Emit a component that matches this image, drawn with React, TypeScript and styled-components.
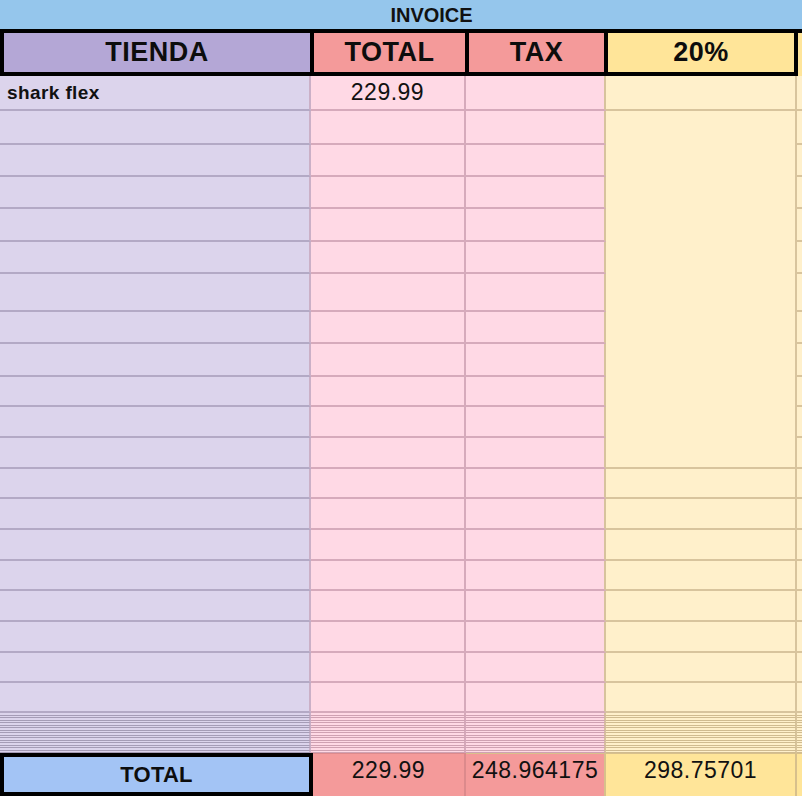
import React from 'react';
import styled, { createGlobalStyle } from 'styled-components';

const GlobalStyle = createGlobalStyle`
  html, body { margin: 0; padding: 0; background: #ffffff; }
  body { font-family: "Liberation Sans", Arial, sans-serif; color: #111; }
  *, *::before, *::after { box-sizing: border-box; }
`;

type ColKey = 'store' | 'total' | 'tax' | 'pct' | 'extra';

const palette: Record<ColKey, { bg: string; hLine: string; vLine: string; thinLine: string }> = {
  store: { bg: '#dcd4ec', hLine: '#b3a9c5', vLine: '#cbb0c7', thinLine: '#a59cb6' },
  total: { bg: '#ffd9e5', hLine: '#d6aabb', vLine: '#d6aabb', thinLine: '#cfa1b2' },
  tax: { bg: '#ffd9e5', hLine: '#d6aabb', vLine: '#d7c39d', thinLine: '#cfa1b2' },
  pct: { bg: '#fff0cb', hLine: '#d8c49d', vLine: '#d8c49d', thinLine: '#d0bb90' },
  extra: { bg: '#fff0cb', hLine: '#d8c49d', vLine: '#d8c49d', thinLine: '#d0bb90' },
};

const cols: ColKey[] = ['store', 'total', 'tax', 'pct', 'extra'];

const Sheet = styled.div`
  width: 802px;
  height: 796px;
  overflow: hidden;
  display: flex;
  flex-direction: column;
`;

const TitleBar = styled.div`
  height: 29px;
  flex: none;
  background: #95c6ec;
  display: flex;
  align-items: center;
  justify-content: center;
  padding: 2px 0 0 61px;
  font-size: 20px;
  font-weight: 700;
  color: #111;
`;

const HeaderRow = styled.div`
  flex: none;
  display: flex;
  background: #000;
  padding-top: 4px;
`;

const HeaderBox = styled.div`
  display: grid;
  grid-template-columns: 306px 151px 135px 186px;
  gap: 4px;
  padding: 0 4px 4px 4px;
  background: #000;
`;

const HeaderCell = styled.div<{ $bg: string }>`
  height: 39px;
  background: ${(p) => p.$bg};
  display: flex;
  align-items: center;
  justify-content: center;
  font-size: 27px;
  font-weight: 700;
  letter-spacing: 0.5px;
  color: #0d0d0d;
`;

const HeaderSliver = styled.div`
  flex: 1;
  background: #ffe599;
`;

const Body = styled.div<{ $rows: string }>`
  flex: none;
  display: grid;
  grid-template-columns: 311px 155px 140px 191px 1fr;
  grid-template-rows: ${(p) => p.$rows};
`;

const Cell = styled.div<{ $col: ColKey; $thin?: boolean; $span?: number }>`
  background: ${(p) => palette[p.$col].bg};
  border-bottom: ${(p) => (p.$thin ? 1 : 2)}px solid
    ${(p) => (p.$thin ? palette[p.$col].thinLine : palette[p.$col].hLine)};
  border-right: ${(p) => (p.$col === 'extra' ? 0 : 2)}px solid ${(p) => palette[p.$col].vLine};
  grid-row: ${(p) => (p.$span ? `span ${p.$span}` : 'auto')};
  display: flex;
  align-items: center;
  overflow: hidden;
  min-height: 0;
`;

const StoreText = styled.span`
  padding-left: 7px;
  font-size: 19px;
  font-weight: 700;
  letter-spacing: 0.4px;
  color: #111;
  white-space: nowrap;
`;

const NumberText = styled.span`
  flex: 1;
  text-align: center;
  font-size: 23px;
  letter-spacing: 0.5px;
  color: #111;
  white-space: nowrap;
`;

const TotalRow = styled.div`
  flex: none;
  height: 43px;
  display: grid;
  grid-template-columns: 313px 153px 140px 191px 1fr;
`;

const TotalLabel = styled.div`
  border: 4px solid #000;
  background: #a3c4f5;
  display: flex;
  align-items: center;
  justify-content: center;
  font-size: 22px;
  font-weight: 700;
  letter-spacing: 0.2px;
  color: #0d0d0d;
`;

const TotalCell = styled.div<{ $bg: string; $line: string; $last?: boolean }>`
  background: ${(p) => p.$bg};
  border-top: 1px solid ${(p) => p.$line};
  border-right: ${(p) => (p.$last ? 0 : 2)}px solid ${(p) => p.$line};
  display: flex;
  justify-content: center;
  align-items: flex-start;
  padding-top: 3px;
  font-size: 23px;
  letter-spacing: 0.5px;
  color: #111;
  white-space: nowrap;
`;

const rowHeights = [35, 34, 32, 32, 33, 32, 38, 32, 33, 30, 31, 31, 30, 31, 31, 30, 31, 31, 30, 30];
const thinHeights = Array.from({ length: 16 }, (_, i) => (i % 2 === 0 ? 3 : 2));
const MERGE_START = 1;
const MERGE_SPAN = 11;

export default function App() {
  const rowsTemplate = [...rowHeights, ...thinHeights].map((h) => `${h}px`).join(' ');

  const cells: React.ReactNode[] = [];
  rowHeights.forEach((_, r) => {
    cols.forEach((c) => {
      if (c === 'pct') {
        if (r > MERGE_START && r < MERGE_START + MERGE_SPAN) return;
        if (r === MERGE_START) {
          cells.push(<Cell key={`r${r}-${c}`} $col={c} $span={MERGE_SPAN} />);
          return;
        }
      }
      let content: React.ReactNode = null;
      if (r === 0 && c === 'store') content = <StoreText>shark flex</StoreText>;
      if (r === 0 && c === 'total') content = <NumberText>229.99</NumberText>;
      cells.push(
        <Cell key={`r${r}-${c}`} $col={c}>
          {content}
        </Cell>
      );
    });
  });
  thinHeights.forEach((_, r) => {
    cols.forEach((c) => {
      cells.push(<Cell key={`t${r}-${c}`} $col={c} $thin />);
    });
  });

  return (
    <>
      <GlobalStyle />
      <Sheet>
        <TitleBar>INVOICE</TitleBar>
        <HeaderRow>
          <HeaderBox>
            <HeaderCell $bg="#b4a7d6">TIENDA</HeaderCell>
            <HeaderCell $bg="#f49a9a">TOTAL</HeaderCell>
            <HeaderCell $bg="#f49a9a">TAX</HeaderCell>
            <HeaderCell $bg="#ffe599">20%</HeaderCell>
          </HeaderBox>
          <HeaderSliver />
        </HeaderRow>
        <Body $rows={rowsTemplate}>{cells}</Body>
        <TotalRow>
          <TotalLabel>TOTAL</TotalLabel>
          <TotalCell $bg="#f49a9a" $line="#dc8a8c">229.99</TotalCell>
          <TotalCell $bg="#f49a9a" $line="#d8c08c">248.964175</TotalCell>
          <TotalCell $bg="#ffe599" $line="#d8c08c">298.75701</TotalCell>
          <TotalCell $bg="#ffe599" $line="#d8c08c" $last />
        </TotalRow>
      </Sheet>
    </>
  );
}
